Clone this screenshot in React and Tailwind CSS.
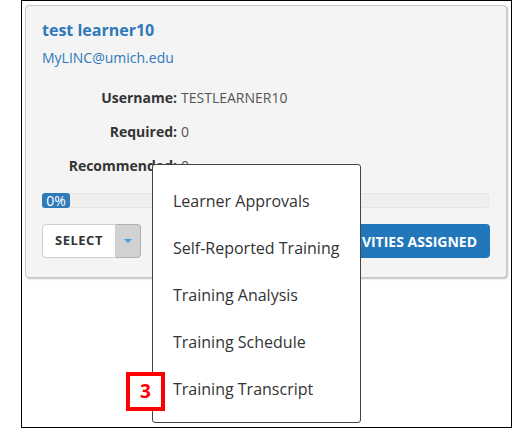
import React from "react";

const font = { fontFamily: '"Open Sans", "Liberation Sans", sans-serif' };

const menuItems = [
  "Learner Approvals",
  "Self-Reported Training",
  "Training Analysis",
  "Training Schedule",
  "Training Transcript",
];

function InfoRow({ label, value }) {
  return (
    <div className="flex items-center h-[34px] text-[14px]">
      <span className="w-[135px] text-right font-bold text-[#333]">{label}</span>
      <span className="ml-[4px] text-[#555]">{value}</span>
    </div>
  );
}

export default function App() {
  return (
    <div className="w-[514px] h-[428px] bg-white overflow-hidden" style={font}>
      <div className="relative ml-[21px] w-[491px] h-[428px] border border-black">
        {/* Learner card */}
        <div className="mt-[4px] ml-[3px] w-[482px] h-[273px] bg-[#f4f4f4] border border-[#c8c8c8] rounded-[4px] shadow-[1px_1px_2px_rgba(0,0,0,0.25)] px-[16px] pt-[13px]">
          <div className="text-[16px] leading-[22px] font-bold text-[#2e79b9]">test learner10</div>
          <div className="mt-[7px] text-[14px] leading-[20px] text-[#2e79b9]">MyLINC@umich.edu</div>
          <div className="mt-[12px]">
            <InfoRow label="Username:" value="TESTLEARNER10" />
            <InfoRow label="Required:" value="0" />
            <InfoRow label="Recommended:" value="0" />
          </div>

          {/* Progress */}
          <div className="mt-[11px] h-[15px] w-[447px] rounded-[3px] bg-[#efefef] border border-[#e6e6e6] flex">
            <div className="-m-px h-[15px] w-[28px] rounded-[3px] bg-[#2f7ab9] text-white text-[14px] leading-[15px] flex items-center justify-center">
              0%
            </div>
          </div>

          {/* Buttons */}
          <div className="mt-[16px] flex justify-between w-[448px]">
            <div className="flex h-[34px]">
              <div className="w-[74px] bg-white border border-[#cfcfcf] rounded-l-[4px] flex items-center justify-center text-[13px] font-bold tracking-[0.5px] text-[#333]">
                SELECT
              </div>
              <div className="w-[25px] bg-[#d2d2d2] border border-[#b0b0b0] border-l-0 rounded-r-[4px] flex items-center justify-center">
                <svg width="8" height="5" viewBox="0 0 8 5">
                  <path d="M0 0 L8 0 L4 4 Z" fill="#4b9bd6" />
                </svg>
              </div>
            </div>
            <div className="h-[34px] bg-[#2277bb] rounded-[4px] pl-[14px] pr-[13px] flex items-center text-white font-bold text-[14px]">
              NO ACTIVITIES ASSIGNED
            </div>
          </div>
        </div>

        {/* Dropdown menu */}
        <div className="absolute left-[130px] top-[163px] w-[209px] h-[259px] bg-white border border-[#444] rounded-[3px] pt-[12px]">
          {menuItems.map((item) => (
            <div key={item} className="h-[47px] flex items-center pl-[20px] text-[16px] text-[#333]">
              {item}
            </div>
          ))}
        </div>

        {/* Step marker */}
        <div className="absolute left-[104px] top-[371px] w-[39px] h-[39px] bg-white border-[4px] border-[#ff0000] flex items-center justify-center text-[#ff0000] font-bold text-[19px] leading-none">
          3
        </div>
      </div>
    </div>
  );
}
